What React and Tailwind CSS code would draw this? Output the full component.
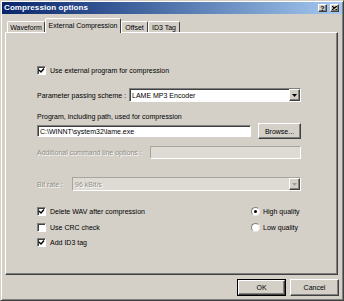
import React from 'react';

const raised =
  'border border-t-white border-l-white border-r-[#404040] border-b-[#404040] shadow-[inset_-1px_-1px_0_#808080]';
const sunken =
  'border border-t-[#808080] border-l-[#808080] border-r-white border-b-white shadow-[inset_1px_1px_0_#404040]';
const sunkenOff =
  'border border-t-[#a8a59e] border-l-[#a8a59e] border-r-white border-b-white';
const disabledText = 'text-[#8f8c86] [text-shadow:1px_1px_0_#ffffff]';

function Check({ checked, label }) {
  return (
    <div className="flex items-center h-[9px] gap-[4px]">
      <div className={`w-[9px] h-[9px] bg-white ${sunken} flex items-center justify-center`}>
        {checked && (
          <svg width="7" height="7" viewBox="0 0 7 7">
            <path d="M1 3 L3 5 L6 1.5" stroke="#000" strokeWidth="1.4" fill="none" />
          </svg>
        )}
      </div>
      <span>{label}</span>
    </div>
  );
}

function Radio({ checked, label }) {
  return (
    <div className="flex items-center h-[9px] gap-[3px]">
      <div className="w-[9px] h-[9px] rounded-full bg-white border border-t-[#808080] border-l-[#808080] border-r-[#e8e6e0] border-b-[#e8e6e0] flex items-center justify-center">
        {checked && <div className="w-[3px] h-[3px] rounded-full bg-black" />}
      </div>
      <span>{label}</span>
    </div>
  );
}

function Arrow({ disabled }) {
  return (
    <div
      className={`w-[11px] h-full ${raised} bg-[#d4d0c8] flex items-center justify-center`}
    >
      <svg width="5" height="3" viewBox="0 0 5 3">
        <path d="M0 0 H5 L2.5 3 Z" fill={disabled ? '#a09d96' : '#000'} />
      </svg>
    </div>
  );
}

function Tab({ label, selected, w }) {
  if (selected) {
    return (
      <div
        className={`relative z-10 h-[15px] mb-[-1px] bg-[#d4d0c8] border border-b-0 border-t-white border-l-white border-r-[#404040] rounded-t-[2px] flex items-center justify-center pb-[1px]`}
        style={{ width: w }}
      >
        {label}
      </div>
    );
  }
  return (
    <div
      className="h-[11px] bg-[#d4d0c8] border border-b-0 border-t-white border-l-white border-r-[#404040] rounded-t-[2px] flex items-center justify-center"
      style={{ width: w }}
    >
      {label}
    </div>
  );
}

export default function App() {
  return (
    <div className="w-[344px] h-[301px] bg-[#d4d0c8] border border-t-[#d4d0c8] border-l-[#d4d0c8] border-r-[#404040] border-b-[#404040] shadow-[inset_1px_1px_0_#fff,inset_-1px_-1px_0_#808080] p-[1px] flex flex-col text-[7px] leading-none text-black font-['Liberation_Sans',Arial,sans-serif] overflow-hidden">
      {/* title bar */}
      <div className="h-[12px] shrink-0 bg-gradient-to-r from-[#0a246a] to-[#a6caf0] flex items-center justify-between pl-[2px] pr-[3px]">
        <span className="text-white font-bold text-[8px] tracking-[0.1px]">Compression options</span>
        <div className="flex gap-[3px]">
          <div className={`w-[9px] h-[8px] bg-[#d4d0c8] ${raised} flex items-center justify-center text-[7px] font-bold`}>
            ?
          </div>
          <div className={`w-[9px] h-[8px] bg-[#d4d0c8] ${raised} flex items-center justify-center`}>
            <svg width="5" height="4" viewBox="0 0 5 4">
              <path d="M0 0 L5 4 M5 0 L0 4" stroke="#000" strokeWidth="1.2" />
            </svg>
          </div>
        </div>
      </div>

      {/* tabs */}
      <div className="mt-[4px] h-[14px] shrink-0 flex items-end pl-[5px]">
        <Tab label="Waveform" w={38} />
        <Tab label="External Compression" w={76} selected />
        <Tab label="Offset" w={27} />
        <Tab label="ID3 Tag" w={32} />
      </div>

      {/* panel */}
      <div className="ml-[3px] w-[333px] h-[243px] shrink-0 border border-t-white border-l-white border-r-[#404040] border-b-[#404040] shadow-[inset_-1px_-1px_0_#808080] pl-[31px] flex flex-col">
        <div className="mt-[33px]">
          <Check checked label="Use external program for compression" />
        </div>

        <div className="mt-[13px] h-[14px] flex items-center">
          <span className="w-[92px]">Parameter passing scheme :</span>
          <div className={`w-[172px] h-[14px] bg-white ${sunken} flex items-stretch`}>
            <span className="flex-1 pl-[2px] flex items-center">LAME MP3 Encoder</span>
            <Arrow />
          </div>
        </div>

        <div className="mt-[9px] h-[10px] flex items-center">
          Program, including path, used for compression
        </div>

        <div className="mt-[2px] h-[16px] flex items-center">
          <div className={`w-[214px] h-[12px] bg-white ${sunken} pl-[2px] flex items-center`}>
            C:\WINNT\system32\lame.exe
          </div>
          <div className={`ml-[7px] w-[43px] h-[16px] ${raised} flex items-center justify-center`}>
            Browse...
          </div>
        </div>

        <div className="mt-[7px] h-[13px] flex items-center">
          <span className={`w-[113px] ${disabledText}`}>Additional command line options :</span>
          <div className={`w-[151px] h-[13px] bg-[#dedbd4] ${sunkenOff}`} />
        </div>

        <div className="mt-[18px] h-[14px] flex items-center">
          <span className={`w-[35px] ${disabledText}`}>Bit rate :</span>
          <div className={`w-[229px] h-[14px] bg-[#dedbd4] ${sunkenOff} flex items-stretch`}>
            <span className={`flex-1 pl-[2px] flex items-center ${disabledText}`}>96 kBit/s</span>
            <Arrow disabled />
          </div>
        </div>

        <div className="mt-[16px] flex">
          <div className="w-[214px] flex flex-col">
            <Check checked label="Delete WAV after compression" />
            <div className="mt-[7px]">
              <Check label="Use CRC check" />
            </div>
            <div className="mt-[6px]">
              <Check checked label="Add ID3 tag" />
            </div>
          </div>
          <div className="flex flex-col">
            <Radio checked label="High quality" />
            <div className="mt-[7px]">
              <Radio label="Low quality" />
            </div>
          </div>
        </div>
      </div>

      {/* buttons */}
      <div className="mt-[4px] flex justify-end gap-[4px] pr-[3px]">
        <div className="w-[49px] h-[17px] border border-black">
          <div className={`w-full h-full ${raised} flex items-center justify-center`}>OK</div>
        </div>
        <div className={`w-[49px] h-[17px] ${raised} flex items-center justify-center`}>Cancel</div>
      </div>
    </div>
  );
}
